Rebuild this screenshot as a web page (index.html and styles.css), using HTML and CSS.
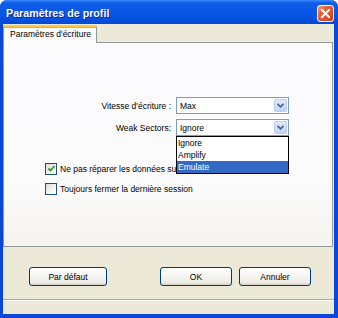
FILE: index.html
```html
<!DOCTYPE html>
<html lang="fr">
<head>
<meta charset="utf-8">
<title>Paramètres de profil</title>
<link rel="stylesheet" href="styles.css">
</head>
<body>
<div class="window">
  <div class="titlebar">
    <span class="title">Paramètres de profil</span>
    <span class="close">
      <svg width="11" height="11" viewBox="0 0 11 11"><path d="M2 2 L9 9 M9 2 L2 9" stroke="#fff" stroke-width="2" stroke-linecap="square"/></svg>
    </span>
  </div>
  <div class="client">
    <div class="tabs">
      <div class="tab">Paramètres d'écriture</div>
    </div>
    <div class="panel">
      <div class="form">
        <label class="lbl">Vitesse d'écriture :</label>
        <div class="combo"><span class="val">Max</span><span class="arrow"><svg width="7" height="5" viewBox="0 0 7 5"><path d="M0.5 0.8 L3.5 3.8 L6.5 0.8" fill="none" stroke="#4d6185" stroke-width="1.6"/></svg></span></div>
        <label class="lbl">Weak Sectors:</label>
        <div class="combo-wrap">
          <div class="combo"><span class="val">Ignore</span><span class="arrow"><svg width="7" height="5" viewBox="0 0 7 5"><path d="M0.5 0.8 L3.5 3.8 L6.5 0.8" fill="none" stroke="#4d6185" stroke-width="1.6"/></svg></span></div>
          <ul class="list">
            <li>Ignore</li>
            <li>Amplify</li>
            <li class="sel">Emulate</li>
          </ul>
        </div>
      </div>
      <div class="checks">
        <div class="check"><span class="box on"><svg width="9" height="9" viewBox="0 0 9 9"><path d="M1.5 4.5 L3.5 6.5 L7.5 2" fill="none" stroke="#21a121" stroke-width="1.8"/></svg></span>Ne pas réparer les données sur le disque</div>
        <div class="check"><span class="box"></span>Toujours fermer la dernière session</div>
      </div>
    </div>
    <div class="buttons">
      <button class="btn wide">Par défaut</button>
      <span class="spacer"></span>
      <button class="btn">OK</button>
      <button class="btn">Annuler</button>
    </div>
    <div class="sep"></div>
  </div>
</div>
</body>
</html>
```

FILE: styles.css
```css
* { box-sizing: border-box; }
html, body { margin: 0; padding: 0; }
body {
  width: 338px;
  height: 318px;
  overflow: hidden;
  font-family: "Liberation Sans", Arial, sans-serif;
  font-size: 8.5px;
  color: #000;
}
.window {
  width: 338px;
  height: 318px;
  background: #0a47d8;
  display: flex;
  flex-direction: column;
  border-radius: 7px 7px 0 0;
}
.titlebar {
  height: 24px;
  flex: none;
  display: flex;
  align-items: center;
  justify-content: space-between;
  padding: 0 4px 0 6px;
  background: linear-gradient(to bottom, #3d8cff 0%, #0f5fe8 12%, #0a58e6 40%, #0554e2 70%, #0248d6 100%);
  border-radius: 7px 7px 0 0;
}
.title {
  color: #fff;
  font-weight: bold;
  font-size: 10.7px;
  text-shadow: 1px 1px 0 #0a2a8a;
  padding-top: 1px;
}
.close {
  width: 17px;
  height: 17px;
  border: 1px solid #fff;
  border-radius: 3px;
  background: linear-gradient(135deg, #f0a080 0%, #e2613a 35%, #cf3f15 100%);
  display: flex;
  align-items: center;
  justify-content: center;
  margin-top: 2px;
}
.client {
  flex: 1;
  margin: 0 4px 4px 3px;
  background: #ece9d8;
  display: flex;
  flex-direction: column;
}
.tabs {
  display: flex;
  padding-top: 1px;
  height: 18px;
  flex: none;
}
.tab {
  width: 94px;
  height: 18px;
  background: #fcfcfe;
  border: 1px solid #919b9c;
  border-bottom: none;
  border-top: 2px solid #ffc83c;
  border-radius: 2px 2px 0 0;
  box-shadow: inset 0 1px 0 #f7a53a;
  padding: 2px 0 0 6px;
  position: relative;
  z-index: 1;
  margin-bottom: -1px;
}
.panel {
  height: 205px;
  flex: none;
  margin-right: 1px;
  border: 1px solid #919b9c;
  background: linear-gradient(to bottom, #fcfcfe 0%, #fbfbfc 70%, #f4f3ee 100%);
  padding-top: 54px;
}
.form {
  display: grid;
  grid-template-columns: 1fr 113px;
  column-gap: 5px;
  row-gap: 5px;
  padding-right: 43px;
  align-items: center;
}
.lbl { text-align: right; }
.combo-wrap { position: relative; }
.combo {
  height: 17px;
  border: 1px solid #7f9db9;
  background: #fff;
  display: flex;
  align-items: center;
  justify-content: space-between;
  padding: 1px 1px 1px 3px;
}
.arrow {
  width: 13px;
  height: 13px;
  border-radius: 2px;
  background: linear-gradient(to bottom, #e0e9fd, #c1d3fb);
  border: 1px solid #bccdf5;
  display: flex;
  align-items: center;
  justify-content: center;
}
.list {
  position: absolute;
  left: 0;
  top: 17px;
  width: 113px;
  margin: 0;
  padding: 0;
  list-style: none;
  background: #fff;
  border: 1px solid #000;
  z-index: 5;
}
.list li {
  height: 12px;
  line-height: 12px;
  padding-left: 1px;
}
.list li.sel {
  background: #316ac5;
  color: #fff;
}
.checks {
  padding: 26px 0 0 41px;
  display: flex;
  flex-direction: column;
  row-gap: 7px;
}
.check {
  display: flex;
  align-items: center;
  height: 13px;
  white-space: nowrap;
}
.box {
  width: 12px;
  height: 12px;
  border: 1px solid #1c5180;
  background: linear-gradient(135deg, #dcdcd7 0%, #f4f4f1 60%, #fff 100%);
  margin-right: 3px;
  display: flex;
  align-items: center;
  justify-content: center;
  flex: none;
}
.buttons {
  display: flex;
  align-items: center;
  padding: 20px 23px 0 26px;
  column-gap: 7px;
  flex: none;
}
.spacer { flex: 1; }
.btn {
  width: 72px;
  height: 19px;
  font-family: "Liberation Sans", Arial, sans-serif;
  font-size: 8.5px;
  color: #000;
  border: 1px solid #003c74;
  border-radius: 3px;
  background: linear-gradient(to bottom, #ffffff 0%, #f6f5f1 50%, #ecebe5 85%, #d6d0c5 100%);
  padding: 0;
}
.btn.wide { width: 78px; }
.sep {
  margin-top: 13px;
  height: 2px;
  border-top: 1px solid #aca899;
  border-bottom: 1px solid #fff;
  flex: none;
}
```
